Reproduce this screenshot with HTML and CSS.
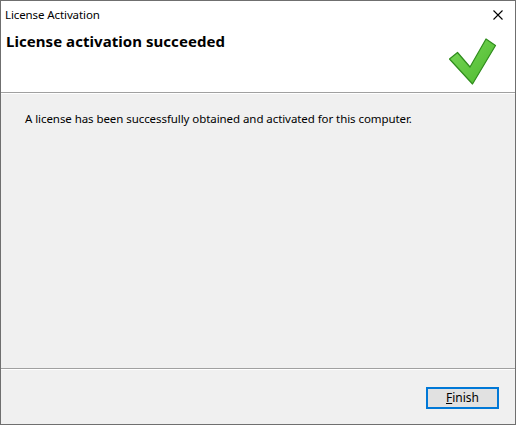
FILE: index.html
```html
<!DOCTYPE html>
<html>
<head>
<meta charset="utf-8">
<link rel="stylesheet" href="styles.css">
</head>
<body>
<div class="window">
  <div class="titlebar">
    <span class="title">License Activation</span>
    <svg class="close" width="10" height="10" viewBox="0 0 10 10"><path d="M0.5 0.5 L9.5 9.5 M9.5 0.5 L0.5 9.5" stroke="#000" stroke-width="1.1" fill="none"/></svg>
  </div>
  <div class="header">
    <h1 class="heading">License activation succeeded</h1>
    <svg class="check" width="50" height="50" viewBox="0 0 50 50">
      <defs>
        <linearGradient id="g" x1="0" y1="0" x2="1" y2="1">
          <stop offset="0" stop-color="#7ad85a"/>
          <stop offset="1" stop-color="#4cb82c"/>
        </linearGradient>
      </defs>
      <polygon points="2.5,22 10.5,15.5 23,30 39,2 48.5,8.5 25.5,47" fill="url(#g)" stroke="#2f8c1c" stroke-width="1.2" stroke-linejoin="round"/>
    </svg>
  </div>
  <div class="content">
    <p class="message">A license has been successfully obtained and activated for this computer.</p>
  </div>
  <div class="footer">
    <button class="btn"><u>F</u>inish</button>
  </div>
</div>
</body>
</html>
```
FILE: styles.css
```css
* { box-sizing: border-box; }
html, body { margin: 0; padding: 0; }
body { background: #ffffff; font-family: "Noto Sans", "Open Sans", sans-serif; }
.window {
  width: 516px;
  height: 425px;
  border: 1px solid #6f6f6f;
  display: flex;
  flex-direction: column;
  background: #f0f0f0;
}
.titlebar {
  height: 29px;
  background: #ffffff;
  display: flex;
  align-items: center;
  justify-content: space-between;
  padding: 0 12px 3px 4px;
}
.title {
  font-size: 11.5px;
  letter-spacing: -0.1px;
  color: #000;
}
.close { display: block; margin-top: 1px; }
.header {
  height: 63px;
  background: #ffffff;
  display: flex;
  justify-content: space-between;
  padding: 0 18px 0 5px;
  border-bottom: 1px solid #a0a0a0;
  box-shadow: 0 1px 0 #ffffff;
}
.heading {
  margin: 1px 0 0 0;
  font-size: 15px;
  letter-spacing: 0.05px;
  font-weight: bold;
  line-height: 20px;
  color: #000;
}
.check { margin-top: 7px; }
.content {
  flex: 1;
  padding: 17px 24px;
  margin-top: 1px;
}
.message {
  margin: 0;
  font-size: 11.5px;
  letter-spacing: -0.07px;
  line-height: 16px;
  color: #000;
}
.footer {
  height: 56px;
  border-top: 1px solid #a0a0a0;
  box-shadow: inset 0 1px 0 #ffffff;
  display: flex;
  justify-content: flex-end;
  align-items: flex-start;
  padding: 18px 16px 0 0;
}
.btn {
  width: 73px;
  height: 22px;
  border: 2px solid #0078d7;
  background: #e1e1e1;
  font-family: "Noto Sans", "Open Sans", sans-serif;
  font-size: 12px;
  color: #000;
  padding: 0;
  line-height: 16px;
}
.btn u { text-decoration: underline; }
```
